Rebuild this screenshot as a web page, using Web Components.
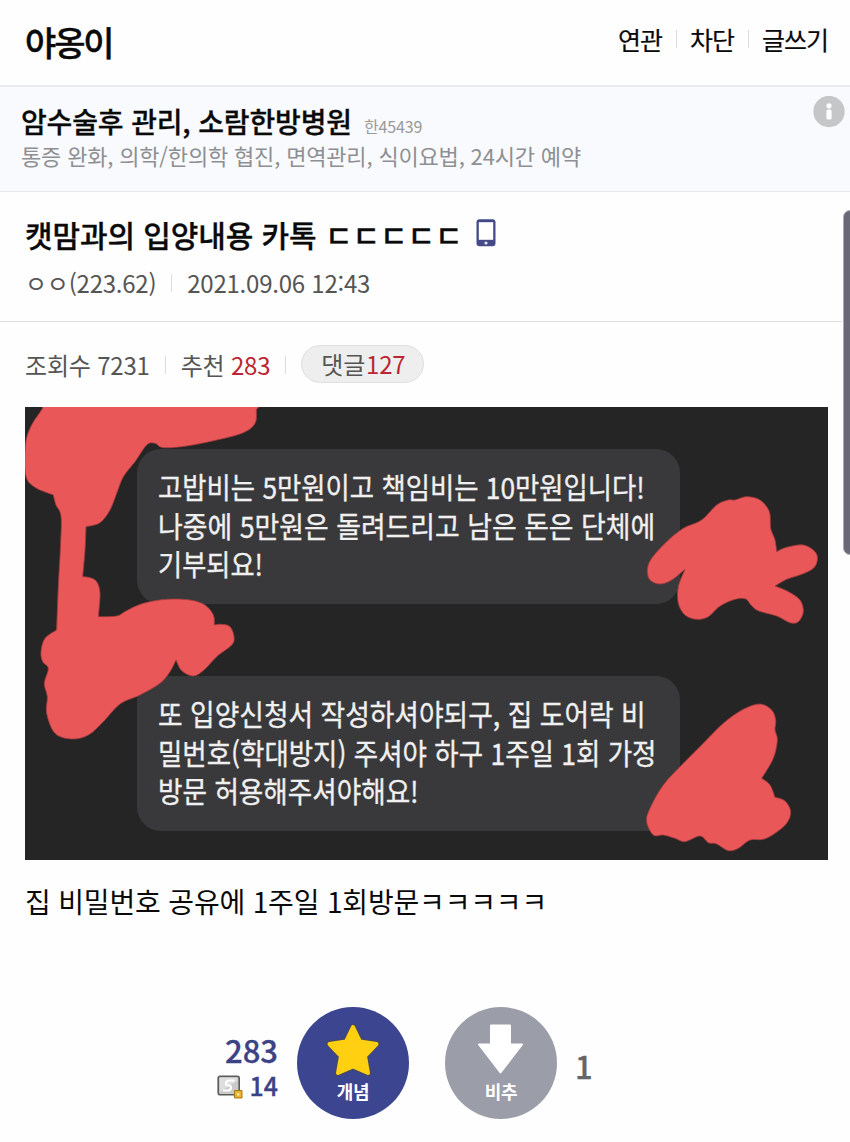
<!DOCTYPE html>
<html lang="ko">
<head>
<meta charset="utf-8">
<title>야옹이</title>
<style>
    body {
        margin: 0;
        width: 850px;
        height: 1142px;
        overflow: hidden;
        background: #fefefe;
        color: #0a0a0a;
        font-family: "Noto Sans CJK KR", sans-serif;
    }
</style>
</head>
<body>
<template id="gallery-header">
<style>
    :host {
        display: flex;
        justify-content: space-between;
        box-sizing: border-box;
        height: 87px;
        padding: 0 22px 0 25px;
        border-bottom: 2px solid #e9ebed;
    }
    h1 {
        margin: 0;
        font-size: 34px;
        font-weight: 500;
        line-height: 83px;
        letter-spacing: -2.1px;
        -webkit-text-stroke: .4px;
    }
    nav {
        display: flex;
        align-items: center;
        height: 78px;
    }
</style>
<h1><slot name="title"></slot></h1>
<nav><slot></slot></nav>
</template>

<template id="header-link">
<style>
    :host {
        display: flex;
        align-items: center;
        font-size: 25px;
        line-height: 30px;
        letter-spacing: -1px;
        -webkit-text-stroke: .2px;
    }
    :host(:not(:first-of-type))::before {
        content: "";
        width: 1px;
        height: 18px;
        margin: 0 13px 0 14px;
        background: #dcdcdc;
    }
</style>
<slot></slot>
</template>

<template id="text-ad">
<style>
    :host {
        display: flex;
        justify-content: space-between;
        box-sizing: border-box;
        height: 105px;
        padding: 9px 5px 0 21px;
        background: #f9fafd;
        border-bottom: 1px solid #e6e8eb;
    }
    .head {
        display: flex;
        align-items: baseline;
        gap: 12px;
        height: 41px;
        line-height: 50px;
        font-size: 28px;
        font-weight: 500;
        letter-spacing: -.15px;
        -webkit-text-stroke: .3px;
    }
    .code {
        font-size: 16px;
        font-weight: 400;
        color: #999;
        -webkit-text-stroke: 0;
    }
    .desc {
        font-size: 22px;
        line-height: 36px;
        letter-spacing: -.17px;
        color: #8d8f92;
    }
    svg {
        width: 32px;
        height: 32px;
    }
</style>
<div>
    <div class="head"><slot name="head"></slot><span class="code"><slot name="code"></slot></span></div>
    <div class="desc"><slot></slot></div>
</div>
<svg viewBox="0 0 32 32">
    <circle cx="16" cy="15.5" r="15.7" fill="#c5c6c8"/>
    <circle cx="16" cy="9.8" r="2.6" fill="#fff"/>
    <rect x="13.4" y="13.6" width="5.200" height="10" rx="1.500" fill="#fff"/>
</svg>
</template>

<template id="post-head">
<style>
    :host {
        display: block;
        box-sizing: border-box;
        width: 842px;
        height: 130px;
        padding: 20px 0 0 25px;
        border-bottom: 1px solid #dcdddf;
    }
    .title {
        display: flex;
        gap: 14px;
        font-size: 30px;
        font-weight: 500;
        line-height: 44px;
        letter-spacing: -.1px;
        -webkit-text-stroke: .3px;
    }
    .meta {
        display: flex;
        align-items: center;
        margin-top: 7px;
        font-size: 24px;
        line-height: 40px;
        letter-spacing: -.24px;
        color: #555;
    }
    .meta i {
        width: 1px;
        height: 18px;
        margin: 0 15px;
        background: #dedede;
    }
    svg {
        width: 20px;
        height: 28px;
        margin-top: 7px;
    }
</style>
<div class="title">
    <slot></slot>
    <svg viewBox="0 0 20 28">
        <rect x=".5" y=".3" width="19" height="27" rx="3" fill="#444a87"/>
        <path d="M2.8 3.2h14.4v17.6H2.8z" fill="#fff"/>
        <circle cx="10" cy="24" r="1.6" fill="#e4e5f2"/>
    </svg>
</div>
<div class="meta"><slot name="author"></slot><i></i><slot name="date"></slot></div>
</template>

<template id="post-stats">
<style>
    :host {
        display: flex;
        align-items: center;
        height: 85px;
        padding-left: 25px;
        font-size: 24px;
        line-height: 36px;
        letter-spacing: -.2px;
        color: #555;
    }
    i {
        width: 1px;
        height: 18px;
        margin: 0 15px;
        background: #dcdcdc;
    }
    b {
        font-weight: 400;
        color: #bb2632;
        letter-spacing: -.2px;
    }
    .pill {
        display: flex;
        box-sizing: border-box;
        width: 123px;
        height: 38px;
        margin-top: -1px;
        padding-left: 19px;
        line-height: 36px;
        border: 1px solid #e0e0e1;
        border-radius: 19px;
        background: #eee;
    }
    .pill b {
        margin-left: 1px;
    }
</style>
<span>조회수 <slot name="views"></slot></span><i></i>
<span>추천 <b><slot name="likes"></slot></b></span><i></i>
<span class="pill">댓글<b><slot name="comments"></slot></b></span>
</template>

<template id="chat-photo">
<style>
    :host {
        display: flex;
        flex-direction: column;
        gap: 72px;
        position: relative;
        box-sizing: border-box;
        width: 803px;
        height: 453px;
        margin-left: 25px;
        padding: 42px 0 0 112px;
        overflow: hidden;
        background: #252526;
    }
    svg {
        position: absolute;
        left: 0;
        top: 0;
        width: 803px;
        height: 453px;
    }
    path {
        fill: #ea5758;
        stroke: #a33c3e;
        stroke-width: .8;
    }
</style>
<slot></slot>
<svg viewBox="25 407 803 453"></svg>
</template>

<template id="chat-bubble">
<style>
    :host {
        display: block;
        box-sizing: border-box;
        width: 543px;
        height: 155px;
        padding: 18px 0 0 21px;
        border-radius: 24px;
        background: #39393b;
        color: #f0f0f0;
    }
</style>
<slot></slot>
</template>

<template id="chat-line">
<style>
    :host {
        display: block;
        width: max-content;
        font-size: 29px;
        line-height: 38.6px;
        white-space: nowrap;
        transform: scaleX(var(--squeeze, .92));
        transform-origin: left;
        -webkit-text-stroke: .35px;
    }
</style>
<slot></slot>
</template>

<template id="post-text">
<style>
    :host {
        display: block;
        height: 147px;
        padding: 21px 0 0 25px;
        box-sizing: border-box;
        font-size: 28px;
        line-height: 40px;
        letter-spacing: -.17px;
    }
</style>
<slot></slot>
</template>

<template id="vote-bar">
<style>
    :host {
        display: flex;
        height: 112px;
    }
    .up {
        display: flex;
        flex-direction: column;
        align-items: flex-end;
        box-sizing: border-box;
        width: 278px;
        padding-top: 22px;
        font-weight: 500;
        color: #3b4286;
        -webkit-text-stroke: .3px;
    }
    .total {
        font-size: 31px;
        line-height: 42px;
    }
    .member {
        display: flex;
        align-items: center;
        gap: 6px;
        font-size: 25px;
        line-height: 28px;
    }
    .member svg {
        width: 26px;
        height: 24px;
        margin-top: 4px;
    }
    .down {
        margin-left: 18px;
        padding-top: 37px;
        font-size: 31px;
        font-weight: 500;
        line-height: 44px;
        color: #666;
        -webkit-text-stroke: .3px;
    }
    vote-button {
        margin-left: 19px;
    }
    vote-button + vote-button {
        margin-left: 36px;
    }
</style>
<div class="up">
    <span class="total"><slot name="total"></slot></span>
    <span class="member">
        <svg viewBox="0 0 26 24">
            <rect x="1.2" y="1.2" width="21" height="18.6" rx="2" fill="#c9c9c9" stroke="#5b5b5b" stroke-width="1.6"/>
            <path d="M3 3h17v3L3 17z" fill="#dedede"/>
            <path d="M17.500 5.500h-5c-4 0-5 5-1 5 4 0 3 5-1 5H6" fill="none" stroke="#fff" stroke-width="2.2"/>
            <path d="M17.5 15.5h7.500v7.500h-7.500z" fill="#e8b02c" stroke="#a47a1e"/>
            <path d="M20.300 18h2v2.500h-2z" fill="#fff0b5"/>
        </svg>
        <slot name="member"></slot>
    </span>
</div>
<vote-button color="#3b4590" label="개념">
    <svg width="58" height="56" viewBox="0 0 58 56">
        <path d="M29 5 36 19.500 52.500 22 41 34 44 51 29 44.500 14 51 17 34 5.500 22 22 19.500z" fill="#ffd011" stroke="#4b4a55" stroke-width="6" stroke-linejoin="round"/>
        <path d="M29 5 36 19.500 52.500 22 41 34 44 51 29 44.500 14 51 17 34 5.500 22 22 19.500z" fill="#ffd011" stroke="#ffd011" stroke-width="4" stroke-linejoin="round"/>
    </svg>
</vote-button>
<vote-button color="#9b9da9" label="비추">
    <svg width="58" height="56" viewBox="0 0 58 56">
        <path d="M19 3.500H38V22.500H50L28.500 50.500 7 22.500H19z" fill="#fff" stroke="#fff" stroke-width="2" stroke-linejoin="round"/>
    </svg>
</vote-button>
<div class="down"><slot name="down"></slot></div>
</template>

<template id="vote-button">
<style>
    :host {
        display: flex;
        flex-direction: column;
        align-items: center;
        box-sizing: border-box;
        width: 112px;
        height: 112px;
        padding-top: 15px;
        border-radius: 50%;
    }
    span {
        font-size: 18px;
        font-weight: 700;
        line-height: 26px;
        letter-spacing: -.2px;
        color: #fff;
    }
</style>
<slot></slot>
<span></span>
</template>

<template id="scroll-thumb">
<style>
    :host {
        position: absolute;
        left: 843px;
        top: 210px;
        box-sizing: border-box;
        width: 14px;
        height: 345px;
        border: 1px solid #aaaab2;
        border-radius: 7px;
        background: #686878;
    }
</style>
</template>

<gallery-header>
    <span slot="title">야옹이</span>
    <header-link>연관</header-link>
    <header-link>차단</header-link>
    <header-link>글쓰기</header-link>
</gallery-header>
<text-ad>
    <span slot="head">암수술후 관리, 소람한방병원</span>
    <span slot="code">한45439</span>
    통증 완화, 의학/한의학 협진, 면역관리, 식이요법, 24시간 예약
</text-ad>
<post-head>
    <span>캣맘과의 입양내용 카톡 ㄷㄷㄷㄷㄷ</span>
    <span slot="author">ㅇㅇ(223.62)</span>
    <span slot="date">2021.09.06 12:43</span>
</post-head>
<post-stats>
    <span slot="views">7231</span>
    <span slot="likes">283</span>
    <span slot="comments">127</span>
</post-stats>
<chat-photo>
    <chat-bubble>
        <chat-line style="--squeeze: .909">고밥비는 5만원이고 책임비는 10만원입니다!</chat-line>
        <chat-line style="--squeeze: .926">나중에 5만원은 돌려드리고 남은 돈은 단체에</chat-line>
        <chat-line style="--squeeze: .905">기부되요!</chat-line>
    </chat-bubble>
    <chat-bubble>
        <chat-line style="--squeeze: .922">또 입양신청서 작성하셔야되구, 집 도어락 비</chat-line>
        <chat-line style="--squeeze: .913">밀번호(학대방지) 주셔야 하구 1주일 1회 가정</chat-line>
        <chat-line style="--squeeze: .917">방문 허용해주셔야해요!</chat-line>
    </chat-bubble>
</chat-photo>
<post-text>집 비밀번호 공유에 1주일 1회방문ㅋㅋㅋㅋㅋ</post-text>
<vote-bar>
    <span slot="total">283</span>
    <span slot="member">14</span>
    <span slot="down">1</span>
</vote-bar>
<scroll-thumb></scroll-thumb>

<script>
    class TemplateElement extends HTMLElement {
        constructor() {
            super();
            const t = document.getElementById(this.localName);
            this.attachShadow({mode: "open"}).appendChild(t.content.cloneNode(true));
        }
    }

    // outlines of the marker strokes, in thirds of a pixel from each origin;
    // a point given twice is a sharp corner
    const MARKS = [
        [0, 400, "150,-20 127,26 95,75 77,130 77,225 105,262 160,285 160,285 168,315 183,348 182,430 175,560 170,690 170,690 135,715 123,755 128,785 145,805 133,850 142,890 140,940 165,1000 215,1017 265,1005 310,965 360,912 420,885 480,850 510,815 528,780 528,780 545,812 580,828 612,810 650,770 695,735 702,710 690,680 665,673 643,675 643,675 640,645 615,615 570,600 500,598 430,610 380,632 350,648 295,650 295,650 300,580 290,545 270,533 248,530 248,530 255,450 258,380 258,380 300,368 330,330 350,280 370,230 405,185 440,135 465,130 490,143 560,138 650,120 730,98 765,70 769,30 768,-20"],
        [600, 400, "142,510 155,475 200,425 250,385 305,360 350,315 385,300 405,300 440,290 480,300 508,335 512,385 525,420 530,455 530,455 560,442 610,435 645,455 652,480 640,505 605,523 560,538 525,558 525,558 565,575 600,600 610,635 595,665 570,668 530,648 470,630 440,598 440,598 420,595 385,605 355,622 325,650 290,658 255,645 235,610 235,560 255,508 255,508 215,540 180,552 150,540"],
        [600, 400, "140,1265 150,1225 190,1155 250,1090 310,1030 370,970 430,928 480,912 515,930 527,960 525,990 532,1020 520,1075 485,1135 485,1135 510,1155 525,1192 525,1192 555,1203 572,1235 560,1270 525,1300 490,1318 450,1320 415,1345 385,1352 350,1332 325,1328 300,1308 255,1325 225,1315 190,1305 160,1305"]
    ];

    // closed smooth curve through all the points
    function smoothPath(ox, oy, list) {
        const p = list.split(" ").map(s => s.split(",").map(Number)).map(([x, y]) => [ox + x / 3, oy + y / 3]);
        const at = i => p[(i + p.length) % p.length];
        let d = `M${p[0]}`;
        for (let i = 0; i < p.length; i++) {
            const [a, b, c, e] = [at(i - 1), at(i), at(i + 1), at(i + 2)];
            if (b[0] == c[0] && b[1] == c[1]) continue;
            d += `C${b[0] + (c[0] - a[0]) / 6} ${b[1] + (c[1] - a[1]) / 6} ${c[0] - (e[0] - b[0]) / 6} ${c[1] - (e[1] - b[1]) / 6} ${c[0]} ${c[1]}`;
        }
        return d + "z";
    }

    class ChatPhoto extends TemplateElement {
        constructor() {
            super();
            this.shadowRoot.querySelector("svg").innerHTML = MARKS.map(m => `<path d="${smoothPath(...m)}"/>`).join("");
        }
    }

    class VoteButton extends TemplateElement {
        connectedCallback() {
            this.style.background = this.getAttribute("color");
            this.shadowRoot.querySelector("span").textContent = this.getAttribute("label");
        }
    }

    customElements.define("chat-photo", ChatPhoto);
    customElements.define("vote-button", VoteButton);
    for (const name of ["gallery-header", "header-link", "text-ad", "post-head", "post-stats", "chat-bubble", "chat-line", "post-text", "vote-bar", "scroll-thumb"]) {
        customElements.define(name, class extends TemplateElement {});
    }
</script>
</body>
</html>
